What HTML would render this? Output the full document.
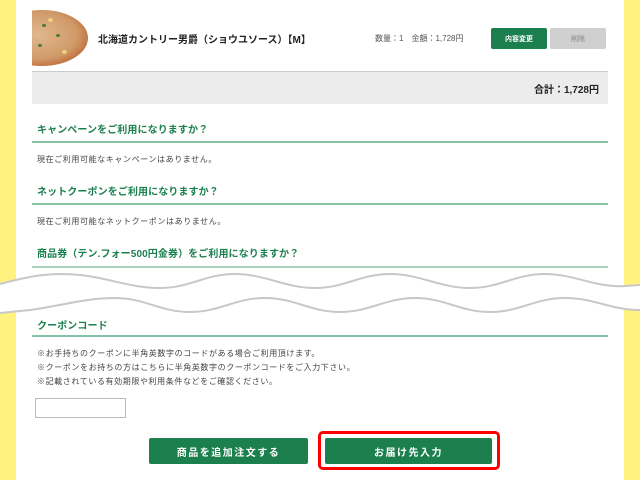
<!DOCTYPE html>
<html><head><meta charset="utf-8"><style>
*{margin:0;padding:0;box-sizing:border-box}
body{width:640px;height:480px;overflow:hidden;background:#fff27f;font-family:"Liberation Sans","Noto Sans CJK JP",sans-serif;position:relative}
.main{position:absolute;left:16px;top:0;width:608px;height:480px;background:#fff}
.a{position:absolute;white-space:nowrap}
.h{font-size:10px;font-weight:bold;color:#1b7f4e;letter-spacing:0.1px;left:37px}
.ln{position:absolute;left:32px;width:576px;height:2px;background:#86c2a4}
.t{font-size:8px;color:#444;letter-spacing:0.6px;left:37px}
.btn{position:absolute;background:#1b7f4e;color:#fff;font-weight:bold;display:flex;align-items:center;justify-content:center;border-radius:2px}
</style></head><body>
<div class="main"></div>
<div class="a" style="left:32px;top:10px;width:56px;height:56px;overflow:hidden">
<div style="position:absolute;left:-36px;top:0;width:92px;height:56px;border-radius:50%;background:radial-gradient(ellipse at 45% 45%,#e0b890 0%,#d09a68 55%,#b8602e 82%,#a54a20 100%)"></div>
<div style="position:absolute;left:10px;top:14px;width:4px;height:3px;background:#4a7a30;border-radius:50%"></div>
<div style="position:absolute;left:24px;top:24px;width:4px;height:3px;background:#4a7a30;border-radius:50%"></div>
<div style="position:absolute;left:6px;top:34px;width:4px;height:3px;background:#4a7a30;border-radius:50%"></div>
<div style="position:absolute;left:30px;top:40px;width:5px;height:4px;background:#f0d080;border-radius:50%"></div>
<div style="position:absolute;left:16px;top:8px;width:5px;height:4px;background:#f0d080;border-radius:50%"></div>
</div>
<div class="a" style="left:98px;top:31px;font-size:10px;font-weight:bold;color:#222">北海道カントリー男爵（ショウユソース）【M】</div>
<div class="a" style="left:375px;top:33px;font-size:8px;color:#555">数量：1　金額：1,728円</div>
<div class="btn" style="left:491px;top:28px;width:56px;height:21px;font-size:7px">内容変更</div>
<div class="btn" style="left:550px;top:28px;width:56px;height:21px;font-size:7px;background:#cfcfcf;color:#888;font-weight:normal">削除</div>
<div class="a" style="left:32px;top:71px;width:576px;height:33px;background:#ececec;border-top:1px solid #ccc"></div>
<div class="a" style="right:41px;top:81px;font-size:10px;font-weight:bold;color:#222">合計：1,728円</div>

<div class="a h" style="top:121px">キャンペーンをご利用になりますか？</div>
<div class="ln" style="top:141px"></div>
<div class="a t" style="top:154px">現在ご利用可能なキャンペーンはありません。</div>
<div class="a h" style="top:183px">ネットクーポンをご利用になりますか？</div>
<div class="ln" style="top:203px"></div>
<div class="a t" style="top:216px">現在ご利用可能なネットクーポンはありません。</div>
<div class="a h" style="top:245px">商品券（テン.フォー500円金券）をご利用になりますか？</div>
<div class="ln" style="top:266px;background:#a9d2bd"></div>

<svg class="a" style="left:0;top:266px" width="640" height="52" viewBox="0 0 640 52">
<path d="M0,18 C30,10 50,6 80,9 C110,12 130,22 160,22 C190,22 205,8 235,8 C265,8 285,22 315,22 C345,22 360,8 390,8 C420,8 440,22 470,22 C500,22 515,8 545,8 C575,8 595,22 625,20 L640,19 L640,44 C610,44 595,32 565,32 C535,32 520,46 490,46 C460,46 445,32 415,32 C385,32 370,46 340,46 C310,46 295,32 265,32 C235,32 220,46 190,46 C160,46 145,32 115,32 C85,32 60,40 30,44 L0,47 Z" fill="#fff" stroke="none"/>
<path d="M0,18 C30,10 50,6 80,9 C110,12 130,22 160,22 C190,22 205,8 235,8 C265,8 285,22 315,22 C345,22 360,8 390,8 C420,8 440,22 470,22 C500,22 515,8 545,8 C575,8 595,22 625,20 L640,19" fill="none" stroke="#c8c8c8" stroke-width="2"/>
<path d="M0,47 L30,44 C60,40 85,32 115,32 C145,32 160,46 190,46 C220,46 235,32 265,32 C295,32 310,46 340,46 C370,46 385,32 415,32 C445,32 460,46 490,46 C520,46 535,32 565,32 C595,32 610,44 640,44" fill="none" stroke="#c8c8c8" stroke-width="2"/>
</svg>

<div class="a h" style="top:317px">クーポンコード</div>
<div class="ln" style="top:335px"></div>
<div class="a t" style="top:348px">※お手持ちのクーポンに半角英数字のコードがある場合ご利用頂けます。</div>
<div class="a t" style="top:362px">※クーポンをお持ちの方はこちらに半角英数字のクーポンコードをご入力下さい。</div>
<div class="a t" style="top:376px">※記載されている有効期限や利用条件などをご確認ください。</div>
<div class="a" style="left:35px;top:398px;width:91px;height:20px;border:1px solid #bbb;background:#fff"></div>

<div class="btn" style="left:149px;top:438px;width:159px;height:26px;font-size:10px;letter-spacing:1.5px">商品を追加注文する</div>
<div class="a" style="left:318px;top:431px;width:182px;height:39px;border:3px solid #ff0000;border-radius:5px"></div>
<div class="btn" style="left:325px;top:438px;width:167px;height:26px;font-size:10px;letter-spacing:1.5px">お届け先入力</div>
</body></html>
